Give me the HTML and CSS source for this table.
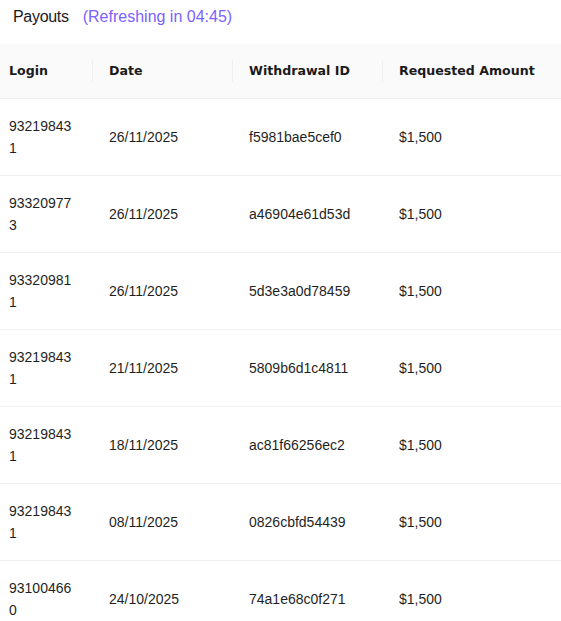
FILE: index.html
```html
<!DOCTYPE html>
<html lang="en">
<head>
<meta charset="utf-8">
<title>Payouts</title>
<link rel="stylesheet" href="styles.css">
</head>
<body>
<div class="page">
  <div class="title-row">
    <span class="title">Payouts</span>
    <span class="refresh">(Refreshing in 04:45)</span>
  </div>
  <table class="payouts">
    <colgroup>
      <col class="c-login">
      <col class="c-date">
      <col class="c-id">
      <col class="c-amount">
    </colgroup>
    <thead>
      <tr>
        <th class="first">Login</th>
        <th>Date</th>
        <th>Withdrawal ID</th>
        <th class="last">Requested Amount</th>
      </tr>
    </thead>
    <tbody>
      <tr><td class="first">932198431</td><td>26/11/2025</td><td>f5981bae5cef0</td><td>$1,500</td></tr>
      <tr><td class="first">933209773</td><td>26/11/2025</td><td>a46904e61d53d</td><td>$1,500</td></tr>
      <tr><td class="first">933209811</td><td>26/11/2025</td><td>5d3e3a0d78459</td><td>$1,500</td></tr>
      <tr><td class="first">932198431</td><td>21/11/2025</td><td>5809b6d1c4811</td><td>$1,500</td></tr>
      <tr><td class="first">932198431</td><td>18/11/2025</td><td>ac81f66256ec2</td><td>$1,500</td></tr>
      <tr><td class="first">932198431</td><td>08/11/2025</td><td>0826cbfd54439</td><td>$1,500</td></tr>
      <tr><td class="first">931004660</td><td>24/10/2025</td><td>74a1e68c0f271</td><td>$1,500</td></tr>
    </tbody>
  </table>
</div>
</body>
</html>
```
FILE: styles.css
```css
html, body {
  margin: 0;
  padding: 0;
  background: #ffffff;
}
body {
  font-family: "Liberation Sans", Arial, sans-serif;
  color: #1f1f1f;
  font-size: 14px;
}
.page {
  width: 561px;
  overflow: hidden;
}
.title-row {
  display: flex;
  align-items: center;
  gap: 14px;
  padding: 6px 0 16px 13px;
  height: 22px;
  font-size: 16px;
  line-height: 22px;
}
.title {
  color: #1a1a1a;
  letter-spacing: -0.3px;
}
.refresh {
  color: #7b61ff;
}
.payouts {
  width: 561px;
  border-collapse: collapse;
  table-layout: fixed;
}
.c-login { width: 93px; }
.c-date { width: 140px; }
.c-id { width: 150px; }
.c-amount { width: 178px; }
.payouts th,
.payouts td {
  padding: 16px;
  line-height: 22px;
  text-align: left;
  vertical-align: middle;
  border-bottom: 1px solid #f0f0f0;
  word-break: break-all;
}
.payouts th {
  background: #fafafa;
  font-family: "DejaVu Sans", Verdana, sans-serif;
  font-size: 12.6px;
  font-weight: bold;
  color: #1a1a1a;
  position: relative;
  white-space: nowrap;
}
.payouts th::before {
  content: "";
  position: absolute;
  right: 0;
  top: 50%;
  width: 1px;
  height: 22px;
  transform: translateY(-50%);
  background: #f0f0f0;
}
.payouts th.last::before {
  display: none;
}
.payouts .first {
  padding-left: 9px;
}
```
